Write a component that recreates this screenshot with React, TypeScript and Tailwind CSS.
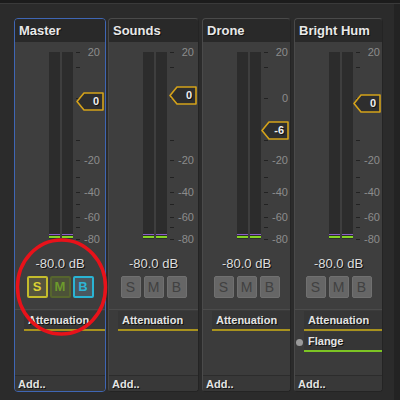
import React from "react";

type Channel = {
  name: string;
  width: string;
  gap: string;
  markerTop: number;
  markerValue: string;
  fx: { name: string; color: string; dot?: boolean }[];
  active?: boolean;
};

const channels: Channel[] = [
  {
    name: "Master",
    width: "w-[92px]",
    gap: "ml-0",
    markerTop: 50,
    markerValue: "0",
    fx: [{ name: "Attenuation", color: "border-[#a8921e]" }],
    active: true,
  },
  {
    name: "Sounds",
    width: "w-[91px]",
    gap: "ml-[2px]",
    markerTop: 44,
    markerValue: "0",
    fx: [{ name: "Attenuation", color: "border-[#a8921e]" }],
  },
  {
    name: "Drone",
    width: "w-[89px]",
    gap: "ml-[3px]",
    markerTop: 79,
    markerValue: "-6",
    fx: [{ name: "Attenuation", color: "border-[#a8921e]" }],
  },
  {
    name: "Bright Hum",
    width: "w-[89px]",
    gap: "ml-[3px]",
    markerTop: 52,
    markerValue: "0",
    fx: [
      { name: "Attenuation", color: "border-[#a8921e]" },
      { name: "Flange", color: "border-[#7cc424]", dot: true },
    ],
  },
];

// y positions inside the meter box (box top = page y 43)
const ticks: { y: number; label?: string }[] = [
  { y: 10, label: "20" },
  { y: 25 },
  { y: 56, label: "0" },
  { y: 98 },
  { y: 118, label: "-20" },
  { y: 135 },
  { y: 150, label: "-40" },
  { y: 162 },
  { y: 175, label: "-60" },
  { y: 185 },
  { y: 197, label: "-80" },
];

const shadow = "[text-shadow:1px_1px_0_#111]";

function Bar() {
  return (
    <div className="flex h-[187px] w-[11px] flex-col justify-end bg-[#2c2c2c]">
      <div className="mb-[1px] h-[1px] bg-[#8a5cc8]" />
      <div className="mb-[1px] h-[2px] bg-[#84d424]" />
    </div>
  );
}

function Marker({ top, value }: { top: number; value: string }) {
  return (
    <div className="absolute right-[1px] h-[19px] w-[28px]" style={{ top }}>
      <svg width="28" height="19" viewBox="0 0 28 19" className="absolute left-0 top-0">
        <polygon
          points="1,9.5 8,1 27,1 27,18 8,18"
          fill="#2e2e2e"
          stroke="#d4a21a"
          strokeWidth="1.6"
          strokeLinejoin="round"
        />
      </svg>
      <span
        className={`absolute right-[5px] top-[2px] text-[11px] font-bold leading-[15px] text-[#eeeeee] ${shadow}`}
      >
        {value}
      </span>
    </div>
  );
}

function Buttons({ active }: { active?: boolean }) {
  if (active) {
    return (
      <div className="mt-[4px] flex justify-center gap-[2px]">
        <div className="flex h-[22px] w-[21px] items-center justify-center rounded-[2px] border-2 border-[#c4bc2c] bg-[#56553e] text-[13px] font-bold text-[#dcd232]">
          S
        </div>
        <div className="flex h-[22px] w-[21px] items-center justify-center rounded-[2px] border-2 border-[#56652e] bg-[#4c5238] text-[13px] font-bold text-[#6d9a2c]">
          M
        </div>
        <div className="flex h-[22px] w-[21px] items-center justify-center rounded-[2px] border-2 border-[#2ab4d4] bg-[#4a5860] text-[13px] font-bold text-[#2fb4d6]">
          B
        </div>
      </div>
    );
  }
  return (
    <div className="mt-[4px] flex justify-center gap-[3px]">
      {["S", "M", "B"].map((l) => (
        <div
          key={l}
          className="flex h-[22px] w-[20px] items-center justify-center rounded-[2px] border border-[#707070] bg-[#666666] text-[14px] text-[#414141]"
        >
          {l}
        </div>
      ))}
    </div>
  );
}

function Strip({ ch }: { ch: Channel }) {
  // the fader marker hides the scale label it sits on
  const hidden = (y: number) => y + 7 > ch.markerTop && y - 7 < ch.markerTop + 19;
  return (
    <div
      className={`${ch.width} ${ch.gap} flex h-[374px] shrink-0 flex-col overflow-hidden rounded-[4px] border bg-[#3e3e3e] ${
        ch.active ? "border-[#3f66b4]" : "border-[#4a4a4a] border-r-[#242424] border-b-[#242424]"
      }`}
    >
      <div
        className={`h-[23px] bg-[#292929] pl-[4px] text-[13px] font-bold leading-[23px] text-[#e8e8e8] ${shadow}`}
      >
        {ch.name}
      </div>

      <div className="relative h-[214px]">
        <div className="absolute left-[34px] top-[10px] flex gap-[2px]">
          <Bar />
          <Bar />
        </div>
        {ticks.map((t) => (
          <React.Fragment key={t.y}>
            <div className="absolute left-[61px] h-[1px] w-[4px] bg-[#222222]" style={{ top: t.y }} />
            {t.label && !hidden(t.y) && (
              <div
                className="absolute left-[64px] w-[21px] text-right text-[11px] leading-[14px] text-[#8c8c8c]"
                style={{ top: t.y - 7 }}
              >
                {t.label}
              </div>
            )}
          </React.Fragment>
        ))}
        <Marker top={ch.markerTop} value={ch.markerValue} />
      </div>

      <div className={`h-[16px] text-center text-[13px] leading-[16px] text-[#dddddd] ${shadow}`}>-80.0 dB</div>
      <Buttons active={ch.active} />

      <div className="mt-[11px] flex flex-1 flex-col gap-[1px] border-t border-[#4b4b4b] bg-[#3b3b3b] pt-[1px]">
        {ch.fx.map((f) => (
          <div key={f.name} className="flex items-center">
            <div className="flex w-[9px] shrink-0 items-center justify-center">
              {f.dot && <div className="h-[7px] w-[7px] rounded-full bg-[#9a9a9a]" />}
            </div>
            <div
              className={`h-[20px] flex-1 border-b-2 ${f.color} bg-[#363636] pl-[4px] text-[11px] font-bold leading-[18px] text-[#e4e4e4] ${shadow}`}
            >
              {f.name}
            </div>
          </div>
        ))}
      </div>

      <div
        className={`h-[16px] border-t border-[#2c2c2c] bg-[#383838] pl-[3px] text-[11px] font-bold leading-[16px] text-[#e4e4e4] ${shadow}`}
      >
        Add..
      </div>
    </div>
  );
}

export default function App() {
  return (
    <div className="relative flex h-[400px] w-[400px] flex-col overflow-hidden bg-[#2b2b2b] font-['Liberation_Sans',Arial,sans-serif]">
      <div className="h-[4px] border-b border-[#3a3a3a] bg-[#1c1c1c]" />
      <div className="flex flex-1">
        <div className="flex flex-1 pl-[14px] pt-[14px]">
          {channels.map((ch) => (
            <Strip key={ch.name} ch={ch} />
          ))}
        </div>
        <div className="w-[6px] bg-[#232323]" />
      </div>

      {/* red annotation circle */}
      <svg className="pointer-events-none absolute left-0 top-0" width="400" height="400">
        <ellipse cx="61.5" cy="287" rx="44" ry="47" fill="none" stroke="#e8121a" strokeWidth="3.5" />
      </svg>
    </div>
  );
}
